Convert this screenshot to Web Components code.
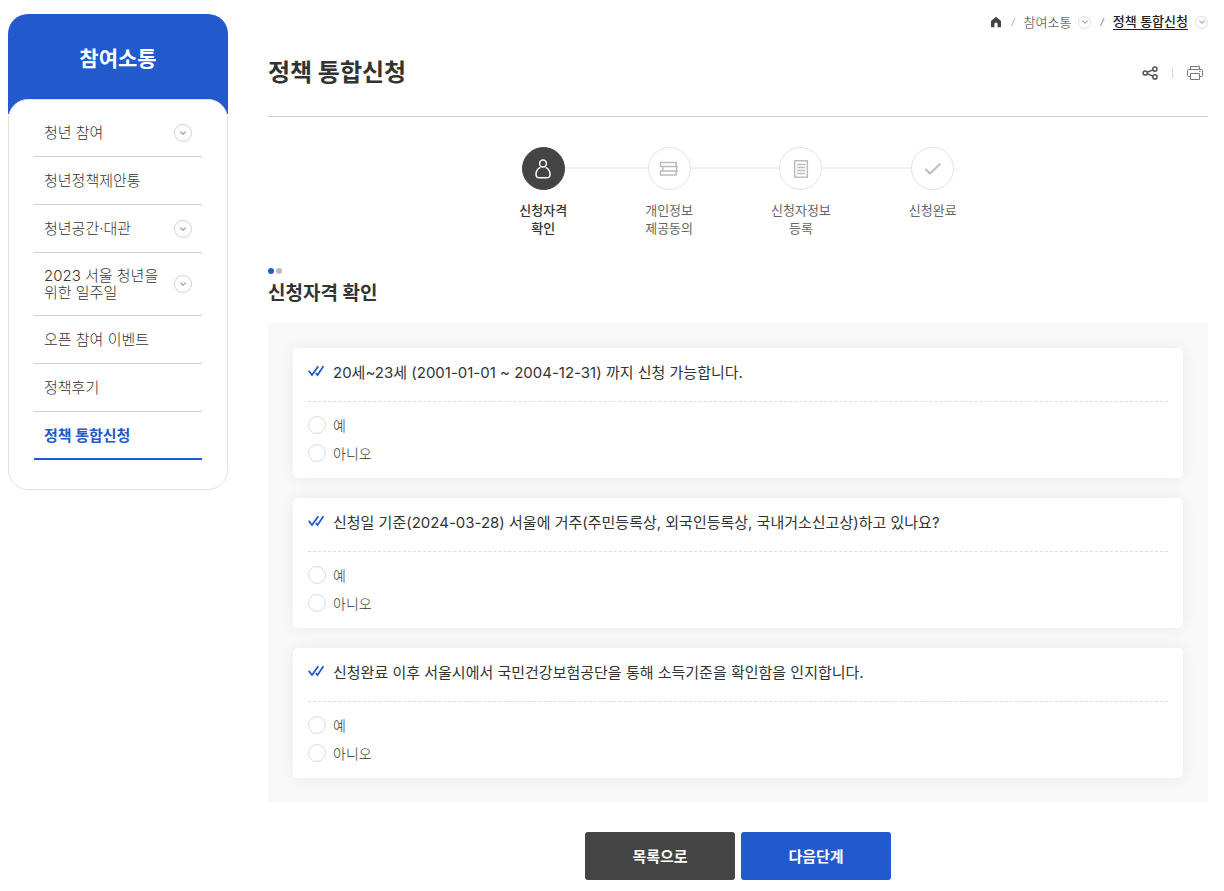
<!DOCTYPE html>
<html lang="ko">
<head>
<meta charset="utf-8">
<meta name="viewport" content="width=device-width, initial-scale=1">
<title>정책 통합신청</title>
<style>
  body {
    margin: 0;
    background: #fff;
    color: #333;
    font: 400 15px/17px Inter, "Noto Sans CJK KR", sans-serif;
    --blue: #2259cd;
    --dark: #444;
  }
</style>
</head>
<body>
<policy-page>
  <side-menu slot="side" heading="참여소통">
    <side-item expandable>청년 참여</side-item>
    <side-item>청년정책제안통</side-item>
    <side-item expandable>청년공간·대관</side-item>
    <side-item expandable>2023 서울 청년을 위한 일주일</side-item>
    <side-item>오픈 참여 이벤트</side-item>
    <side-item>정책후기</side-item>
    <side-item current>정책 통합신청</side-item>
  </side-menu>
  <bread-crumb>
    <crumb-item>참여소통</crumb-item>
    <crumb-item current>정책 통합신청</crumb-item>
  </bread-crumb>
  <page-title>정책 통합신청</page-title>
  <step-list>
    <step-item icon="person" current>신청자격<br>확인</step-item>
    <step-item icon="books">개인정보<br>제공동의</step-item>
    <step-item icon="document">신청자정보<br>등록</step-item>
    <step-item icon="check">신청완료</step-item>
  </step-list>
  <question-section heading="신청자격 확인">
    <question-card name="age">20세~23세 (2001-01-01 ~ 2004-12-31) 까지 신청 가능합니다.</question-card>
    <question-card name="residence">신청일 기준(2024-03-28) 서울에 거주(주민등록상, 외국인등록상, 국내거소신고상)하고 있나요?</question-card>
    <question-card name="income">신청완료 이후 서울시에서 국민건강보험공단을 통해 소득기준을 확인함을 인지합니다.</question-card>
  </question-section>
  <form-actions>
    <action-button>목록으로</action-button>
    <action-button primary>다음단계</action-button>
  </form-actions>
</policy-page>

<script>
  const define = (name, render) => customElements.define(name, class extends HTMLElement {
    constructor() {
      super();
      this.attachShadow({ mode: "open" });
    }
    connectedCallback() {
      this.shadowRoot.innerHTML = render(this);
    }
  });

  define("policy-page", () => `
    <style>
      :host { display: flex; align-items: flex-start; gap: 40px; padding: 14px 16px 11px 8px; }
      aside { flex: 0 0 220px; }
      main { flex: 1; min-width: 0; }
    </style>
    <aside><slot name="side"></slot></aside>
    <main><slot></slot></main>`);

  define("round-toggle", el => `
    <style>
      :host { display: block; flex: none; }
      button { display: flex; align-items: center; justify-content: center; width: 18px; height: 18px;
        padding: 0; border: 1px solid #d2d2d2; border-radius: 50%; background: #fff; color: #999; }
      :host([small]) button { width: 13px; height: 13px; border-color: #ddd; color: #aaa; }
      svg { width: 8px; height: 8px; flex: none; }
    </style>
    <button type="button" aria-label="${el.getAttribute("label")}">
      <svg viewBox="0 0 8 8" fill="none" stroke="currentColor" stroke-width="1.2"><path d="M1.3 2.6 4 5.2l2.7-2.6"/></svg>
    </button>`);

  define("side-menu", el => `
    <style>
      :host { display: block; }
      h2 { margin: 0; height: 100px; box-sizing: border-box; padding: 30px 0; border-radius: 20px 20px 0 0;
        background: var(--blue); color: #fff; text-align: center; font-size: 21px; line-height: 30px; font-weight: 700; }
      nav { margin-top: -15px; padding: 9px 25px 29px; border: 1px solid #e1e1e1; border-radius: 20px; background: #fff; }
    </style>
    <h2>${el.getAttribute("heading")}</h2>
    <nav aria-label="${el.getAttribute("heading")}"><slot></slot></nav>`);

  define("side-item", el => `
    <style>
      :host { display: flex; align-items: center; justify-content: space-between; gap: 8px; box-sizing: border-box;
        min-height: 48px; padding: 14px 10px; border-bottom: 1px solid #d2d2d2; font-weight: 300; }
      :host([current]) { border-bottom: 2px solid var(--blue); color: var(--blue); font-weight: 700; padding-bottom: 13px; }
      a { color: inherit; text-decoration: none; word-break: keep-all; }
    </style>
    <a href="#"><slot></slot></a>
    ${el.hasAttribute("expandable") ? '<round-toggle label="하위 메뉴 열기"></round-toggle>' : ""}`);

  define("bread-crumb", () => `
    <style>
      :host { display: block; }
      nav { display: flex; justify-content: flex-end; align-items: center; gap: 9px; height: 16px; }
      a { display: block; width: 12px; height: 12px; color: #444; }
      svg { display: block; width: 12px; height: 12px; }
    </style>
    <nav aria-label="현재 위치">
      <a href="#" aria-label="홈"><svg viewBox="0 0 12 12"><path fill="currentColor" d="M6 .8 11 5v6.2H7.6V8.1a1.6 1.6 0 0 0-3.2 0v3.1H1V5z"/></svg></a>
      <slot></slot>
    </nav>`);

  define("crumb-item", () => `
    <style>
      :host { display: flex; align-items: center; gap: 7px; font-size: 13px; line-height: 16px; font-weight: 300; }
      span { font-size: 9px; color: #777; font-style: italic; margin-right: 2px; }
      a { color: inherit; text-decoration: none; }
      :host([current]) { font-weight: 500; color: #222; }
      :host([current]) a { border-bottom: 1px solid #222; line-height: 15px; }
    </style>
    <span>/</span><a href="#"><slot></slot></a><round-toggle small label="메뉴 열기"></round-toggle>`);

  define("page-title", () => `
    <style>
      :host { display: flex; align-items: center; justify-content: space-between; height: 86px; border-bottom: 1px solid #ccc; }
      h1 { margin: 0; font-size: 24px; line-height: 36px; font-weight: 700; }
      div { display: flex; align-items: center; gap: 14px; padding-right: 5px; }
      i { width: 1px; height: 10px; background: #d5d5d5; }
      button { display: block; padding: 0; border: 0; background: none; color: #555; }
      button[aria-label="인쇄"] { color: #777; }
      svg { display: block; width: 16px; height: 16px; fill: none; stroke: currentColor; }
    </style>
    <h1><slot></slot></h1>
    <div>
      <button type="button" aria-label="공유"><svg viewBox="0 0 16 16" stroke-width="1.5"><circle cx="3.2" cy="8" r="2.1"/><circle cx="12.9" cy="4.1" r="2.1"/><circle cx="12.9" cy="11.9" r="2.1"/><path d="m5.200 7.200 5.700-2.300M5.200 8.800l5.700 2.300"/></svg></button>
      <i></i>
      <button type="button" aria-label="인쇄"><svg viewBox="0 0 16 16"><path d="M3.500 4.500v-3h9v3M3.500 11.500h-2a1 1 0 0 1-1-1v-5a1 1 0 0 1 1-1h13a1 1 0 0 1 1 1v5a1 1 0 0 1-1 1h-2M3.500 8.500h9v6h-9zM12 6.500h1.500"/></svg></button>
    </div>`);

  define("step-list", () => `
    <style>
      :host { display: flex; justify-content: center; align-items: flex-start; gap: 78px; margin-top: 30px; min-height: 91px; }
    </style>
    <slot></slot>`);

  const stepIcons = {
    person: '<circle cx="10" cy="4.500" r="3.400"/><path d="M7.400 8.400C4.700 9.500 3 12.200 3 15.500c0 2.300 1.200 3.300 3.500 3.300h7c2.300 0 3.500-1 3.500-3.300 0-3.300-1.700-6-4.400-7.100"/>',
    books: '<path d="M18 3.500H1.500v4H18M17 3.500v4M19 7.500H4v4.500h15M17.500 7.500V12M4 12H1.500v4H18M17 12v4"/>',
    document: '<path d="M3.700 1.700h12.600v16.600H3.700zM6 5.500h8M6 8.500h8M6 11.500h8M6 14.500h8"/>',
    check: '<path stroke-width="2" d="m2.500 10 4.500 4.500L17.500 4.500"/>'
  };

  define("step-item", el => `
    <style>
      :host { display: block; position: relative; color: #666; font-size: 13px; line-height: 18px; font-weight: 400; text-align: center; }
      :host(:not(:last-child))::before { content: ""; position: absolute; top: 20px; left: 50%; width: calc(100% + 88px); height: 2px; background: #f1f1f1; }
      .disc { position: relative; z-index: 1; display: flex; align-items: center; justify-content: center; box-sizing: border-box;
        width: 43px; height: 43px; margin: 0 auto 11px; border: 1px solid #e3e3e3; border-radius: 50%; background: #fff; color: #bdbdbd; }
      :host([current]) { color: #333; font-weight: 500; }
      :host([current]) .disc { background: var(--dark); border-color: var(--dark); color: #fff; }
      svg { width: 20px; height: 20px; fill: none; stroke: currentColor; stroke-width: 1.5; }
    </style>
    <div class="disc"><svg viewBox="0 0 20 20" aria-hidden="true">${stepIcons[el.getAttribute("icon")]}</svg></div>
    <slot></slot>`);

  define("question-section", el => `
    <style>
      :host { display: block; margin-top: 30px; }
      .dots { display: flex; gap: 2px; }
      .dots i { width: 6px; height: 6px; border-radius: 50%; background: #bbb; }
      .dots i:first-child { background: var(--blue); }
      h2 { margin: 6px 0 16px; font-size: 19px; line-height: 27px; font-weight: 700; }
      .panel { display: grid; gap: 20px; padding: 25px 25px 24px; background: #f8f8f8; }
    </style>
    <div class="dots"><i></i><i></i></div>
    <h2>${el.getAttribute("heading")}</h2>
    <div class="panel"><slot></slot></div>`);

  define("question-card", el => {
    const name = el.getAttribute("name");
    return `
    <style>
      :host { display: block; padding: 0 15px; border-radius: 5px; background: #fff; box-shadow: 0 0 15px rgba(0, 0, 0, .06); }
      fieldset { margin: 0; padding: 0; border: 0; min-width: 0; }
      .question { display: flex; gap: 9px; padding: 13px 0 16px; border-bottom: 1px dashed #ddd; font-size: 15px; line-height: 24px; font-weight: 400; }
      .question svg { flex: none; width: 16px; height: 20px; fill: none; stroke: var(--blue); stroke-width: 1.8; }
      .answers { padding: 9px 0 11px; }
      label { display: flex; align-items: center; gap: 7px; width: fit-content; height: 28px; font-size: 14px; font-weight: 300; }
      input { appearance: none; box-sizing: border-box; width: 18px; height: 18px; margin: 0; border: 1px solid #ddd; border-radius: 50%; background: #fff; }
      input:checked { border: 5px solid var(--blue); }
    </style>
    <fieldset aria-labelledby="q">
      <div class="question">
        <svg viewBox="0 0 16 20" aria-hidden="true"><path d="m.7 9.800 3.300 4.200L10.300 5.200M7.800 12.200l1.700 1.800 6-8.800"/></svg>
        <span id="q"><slot></slot></span>
      </div>
      <div class="answers">
        <label for="yes"><input type="radio" id="yes" name="${name}">예</label>
        <label for="no"><input type="radio" id="no" name="${name}">아니오</label>
      </div>
    </fieldset>`;
  });

  define("form-actions", () => `
    <style>
      :host { display: flex; justify-content: center; gap: 6px; margin-top: 30px; }
    </style>
    <slot></slot>`);

  define("action-button", () => `
    <style>
      :host { display: block; }
      button { width: 150px; height: 48px; padding: 0; border: 0; border-radius: 3px; background: var(--dark); color: #fff; font: inherit; font-weight: 700; }
      :host([primary]) button { background: var(--blue); }
    </style>
    <button type="button"><slot></slot></button>`);
</script>
</body>
</html>
